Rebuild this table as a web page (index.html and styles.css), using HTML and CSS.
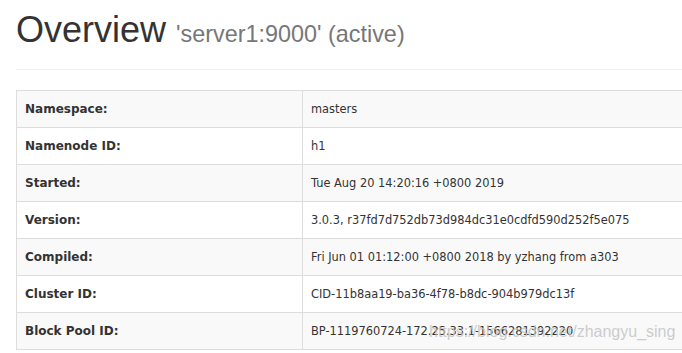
FILE: index.html
```html
<!DOCTYPE html>
<html lang="en">
<head>
  <meta charset="UTF-8" />
  <title>Namenode information</title>
  <meta name="viewport" content="width=device-width, initial-scale=1.0" />
  <link rel="stylesheet" href="styles.css">
</head>
<body>

  <div class="page-header">
    <h1>Overview <small>'server1:9000' (active)</small></h1>
  </div>

  <table class="table-striped">
    <tr><th>Namespace:</th><td>masters</td></tr>
    <tr><th>Namenode ID:</th><td>h1</td></tr>
    <tr><th>Started:</th><td>Tue Aug 20 14:20:16 +0800 2019</td></tr>
    <tr><th>Version:</th><td>3.0.3, r37fd7d752db73d984dc31e0cdfd590d252f5e075</td></tr>
    <tr><th>Compiled:</th><td>Fri Jun 01 01:12:00 +0800 2018 by yzhang from a303</td></tr>
    <tr><th>Cluster ID:</th><td>CID-11b8aa19-ba36-4f78-b8dc-904b979dc13f</td></tr>
    <tr><th>Block Pool ID:</th><td>BP-1119760724-172.25.33.1-1566281392220</td></tr>
  </table>

  <div class="watermark">https://blog.csdn.net/zhangyu_sing</div>
</body>
</html>
```

FILE: styles.css
```css
body {
  font-family: "DejaVu Sans", sans-serif;
  font-size: 12px;
  color: #333;
  background: #fff;
  margin: 0 0 0 16px;
  overflow: hidden;
}
.page-header {
  padding-bottom: 15px;
  margin: 0 0 20px;
  border-bottom: 1px solid #eee;
}
h1 {
  font-family: "Liberation Sans", Arial, sans-serif;
  font-size: 36px;
  font-weight: 500;
  margin: 10px 0 0;
  line-height: 40px;
  color: #333;
}
h1 small {
  font-size: 65%;
  color: #777;
  font-weight: normal;
}
table {
  border-collapse: collapse;
  width: 720px;
  border: 1px solid #ddd;
}
th, td {
  text-align: left;
  padding: 8px;
  line-height: 20px;
  border: 1px solid #ddd;
  vertical-align: top;
}
th {
  width: 269px;
  font-weight: bold;
}
td {
  font-size: 11.4px;
}
.table-striped tr:nth-child(odd) {
  background: #f9f9f9;
}
.watermark {
  position: absolute;
  left: 429px;
  top: 323px;
  font-family: "Liberation Sans", Arial, sans-serif;
  font-size: 16px;
  color: rgba(195, 195, 195, 0.85);
}
```
